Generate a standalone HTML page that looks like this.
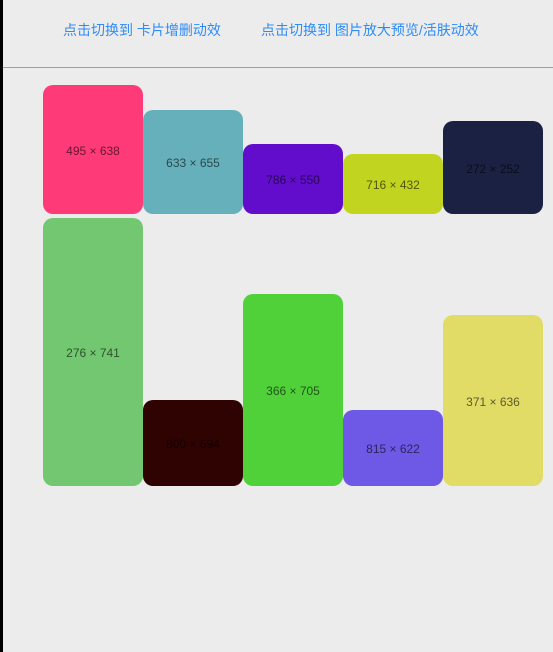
<!DOCTYPE html><html><head><meta charset="utf-8"><style>
body{margin:0;width:553px;height:652px;background:#ececec;position:relative;overflow:hidden;font-family:"Liberation Sans","Noto Sans CJK SC",sans-serif}
.bar{position:absolute;left:0;top:0;width:3px;height:652px;background:#000}
.hl{position:absolute;left:3px;right:0;top:67px;height:1px;background:#a0a0a0}
.t{position:absolute;top:20px;font-size:14px;color:#2f8cf5}
.c{position:absolute;width:100px;border-radius:10px;display:flex;align-items:center;justify-content:center;font-size:12px;color:rgba(0,0,0,.6);padding-top:2px;box-sizing:border-box}
</style></head><body>
<div class="bar"></div>
<div class="t" style="left:63px">点击切换到 卡片增删动效</div>
<div class="t" style="left:261px">点击切换到 图片放大预览/活肤动效</div>
<div class="hl"></div>
<div class="c" style="left:43px;top:85px;height:129px;background:#fe3b78">495 × 638</div>
<div class="c" style="left:143px;top:110px;height:104px;background:#65b0bb">633 × 655</div>
<div class="c" style="left:243px;top:144px;height:70px;background:#620dcc">786 × 550</div>
<div class="c" style="left:343px;top:154px;height:60px;background:#c1d520">716 × 432</div>
<div class="c" style="left:443px;top:121px;height:93px;background:#1b2142">272 × 252</div>
<div class="c" style="left:43px;top:218px;height:268px;background:#72c770">276 × 741</div>
<div class="c" style="left:143px;top:400px;height:86px;background:#300303">800 × 694</div>
<div class="c" style="left:243px;top:294px;height:192px;background:#50d13a">366 × 705</div>
<div class="c" style="left:343px;top:410px;height:76px;background:#6e59e6">815 × 622</div>
<div class="c" style="left:443px;top:315px;height:171px;background:#e1dc66">371 × 636</div>
</body></html>
